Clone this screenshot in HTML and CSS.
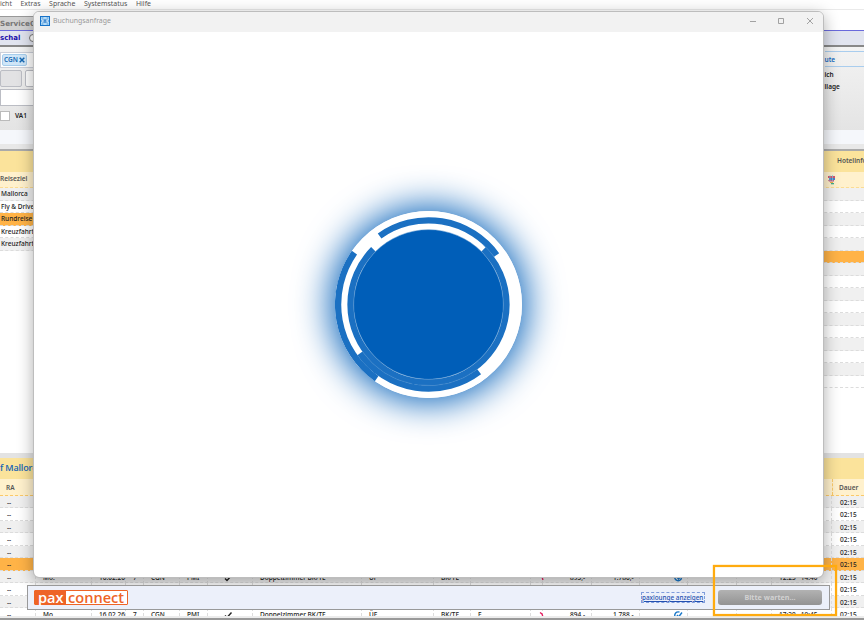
FILE: index.html
```html
<!DOCTYPE html>
<html lang="de">
<head>
    <meta charset="UTF-8">
    <meta name="viewport" content="width=device-width, initial-scale=1.0">
    <title>Buchungsanfrage</title>
    <link rel="stylesheet" href="styles.css">
</head>
<body>
    <div class="app">
        <nav class="menubar">
            <span>icht</span><span>Extras</span><span>Sprache</span><span>Systemstatus</span><span>Hilfe</span>
        </nav>
        <div class="service"><span>ServiceC</span></div>
        <div class="tabs"><b>schal</b><i class="radio"></i></div>
        <div class="filter">
            <div class="filter-left">
                <div class="tag-field"><span class="tag">CGN <svg width="6" height="6" viewBox="0 0 6 6" stroke="#1468b3" stroke-width="1.5"><path d="M.7.7l4.6 4.6M5.3.7L.7 5.3"/></svg></span></div>
                <div class="boxes"><i class="box gray"></i><i class="box"></i></div>
                <div class="field"></div>
                <div class="check"><i></i>VA1</div>
            </div>
            <div class="filter-right">
                <div class="route">ute</div>
                <p>ich</p>
                <p>llage</p>
            </div>
        </div>
        <div class="filter-end"></div>

        <div class="band first"><span class="hotel">Hotelinfo</span></div>
        <div class="heads"><span>Reiseziel</span>
            <svg class="mini" width="8" height="10" viewBox="0 0 8 10">
                <path d="M0 1h7v2H0z" fill="#d6546d"/><path d="M1 3h6v2H1z" fill="#4a7fc9"/>
                <path d="M0 5h6v1.5H1z" fill="#c35b86"/><path d="M2 7h3v1H2z" fill="#e9b04a"/>
                <path d="M3 8h3v1.3H3z" fill="#3fae8d"/><path d="M2 0v6M4.5 0v6" stroke="#7cd0e0" stroke-width=".7"/>
            </svg>
        </div>
        <div class="lists">
            <div class="list" id="regions"></div>
            <div class="list" id="hotels"></div>
        </div>

        <div class="band second">f Mallorca</div>
        <div class="offer head"><span class="c-ra">RA</span><span class="c-dur">Dauer</span></div>
        <div class="offers" id="offers"></div>
        <div class="statusbar"></div>
    </div>

    <div class="window">
        <div class="titlebar">
            <svg width="10" height="10" viewBox="0 0 10 10">
                <path d="M0 0h10v10H0z" fill="#1672c9"/>
                <path d="M1 1h8v8H1z" fill="#b9def8"/>
                <path d="M1.6 2h1.8M6.6 2h1.8M1.6 8h1.8M6.6 8h1.8" stroke="#1672c9" stroke-width=".7"/>
                <path d="M1 5Q5 1.6 9 5 5 8.4 1 5z" fill="#fff" stroke="#1672c9" stroke-width=".5"/>
                <circle cx="5" cy="5" r="1.6" fill="#1672c9"/><circle cx="5" cy="5" r=".6" fill="#fff"/>
            </svg>
            <span class="title">Buchungsanfrage</span>
            <svg class="controls" width="62" height="8" viewBox="0 0 62 8" fill="none" stroke="#999" stroke-width=".9">
                <path d="M0 4.5h6M28.5 1.5h5v5h-5zM57 1l6 6M63 1l-6 6"/>
            </svg>
        </div>
        <div class="content">
            <div class="loader">
                <svg width="187" height="187" viewBox="-93.5 -93.5 187 187" fill="none">
                    <circle r="93.4" fill="#fff"/>
                    <g id="arcs" stroke="#1b70c2" stroke-width="6.3"></g>
                    <circle r="74.8" fill="#005eb8" stroke="#5794cf" stroke-width=".5"/>
                    <path d="M-65.6 47.7A81.1 81.1 0 0 0-16 79.5M-10 80.5A81.1 81.1 0 0 0 48 65.4M54.6-59.9A81 81 0 0 1 65.5-47.6" stroke="#4a8dcc" stroke-width=".6"/>
                </svg>
            </div>
        </div>
    </div>

    <div class="footer">
        <div class="logo"><span>pax</span><b>connect</b></div>
        <a class="lounge">paxlounge anzeigen</a>
        <button class="wait">Bitte warten...</button>
    </div>
    <div class="highlight"></div>

    <script>
        const regions = ["Mallorca", "Fly & Drive", "Rundreise", "Kreuzfahrt", "Kreuzfahrt"];
        document.getElementById("regions").innerHTML = regions.map((r, i) =>
            `<div class="row ${i === 2 ? "active" : ""}">${r.replace("&", "&amp;")}</div>`).join("");
        document.getElementById("hotels").innerHTML = Array.from({ length: 16 }, (_, i) =>
            `<div class="row ${i === 5 ? "active" : ""}"></div>`).join("");

        const tick = '<svg width="9" height="8" viewBox="0 0 9 8" fill="none" stroke="#222" stroke-width="1.4"><path d="M1 4.5l2 2L7.5 1.5"/></svg>';
        const info = '<svg width="9" height="9" viewBox="0 0 9 9" fill="none" stroke="#1877c9" stroke-width="1.4"><path d="M7.5 5A3.4 3.4 0 1 1 5.5 1.2M3 4l1.5 2L8 1.5"/></svg>';
        const red = '<svg width="6" height="8" viewBox="0 0 6 8" fill="none" stroke="#e5175c" stroke-width="1.3"><path d="M1 1.5l2 1.5 1 3"/></svg>';
        const cells = (board, price, total, from, to) => ["--", "Mo.", "16.02.26", "7", "CGN", "PMI", tick,
            "Doppelzimmer BK/TE", "ÜF", "BK/TE", board, red, price, total, info, "", "", `${from} &nbsp; ${to}`, "02:15"];
        const blank = ["--", ...Array(17).fill(""), "02:15"];
        const offers = Array(10).fill(blank);
        offers[6] = cells("", "893,-", "1.786,-", "12:25", "14:40");
        offers[9] = cells("E", "894,-", "1.788,-", "17:20", "19:45");

        // the selected offer stays highlighted while the request is running
        document.getElementById("offers").innerHTML = offers.map((data, i) =>
            `<div class="offer ${i === 5 ? "active" : ""}">${data.map(c => `<span>${c}</span>`).join("")}</div>`).join("");

        const arc = (r, a, b) => {
            const p = t => [r * Math.cos(t * Math.PI / 180), r * Math.sin(t * Math.PI / 180)].map(v => v.toFixed(2)).join(" ");
            return `<path d="M${p(a)}A${r} ${r} 0 ${b - a > 180 ? 1 : 0} 1 ${p(b)}"/>`;
        };
        document.getElementById("arcs").innerHTML =
            arc(78, -45, 225) + arc(84.2, -125.5, -36) + arc(84.2, 53, 144.5) + arc(90.4, 125, 215);
    </script>
</body>
</html>
```
FILE: styles.css
```css
* {
    box-sizing: border-box;
}

body {
    margin: 0;
    width: 864px;
    height: 621px;
    overflow: hidden;
    position: relative;
    background: #fff;
    color: #222;
    font-family: "Noto Sans", "Open Sans", sans-serif;
    font-size: 6.5px;
    font-weight: 500;
    line-height: 12.5px;
}

p {
    margin: 0;
}

.app {
    display: flex;
    flex-direction: column;
    height: 621px;
}

.menubar {
    display: flex;
    gap: 8.6px;
    height: 10px;
    line-height: 8px;
    font-size: 6.95px;
    font-weight: 400;
    color: #555;
    border-bottom: 1px solid #eaeaea;
}

.service {
    height: 20px;
    padding-top: 6px;
}

.service span {
    display: block;
    width: 60px;
    height: 14px;
    border-top: 1px solid #999;
    background: #d2d2d2;
    font: bold 7.2px/13px "DejaVu Sans", sans-serif;
    color: #777;
}

.tabs {
    display: flex;
    align-items: center;
    gap: 9px;
    height: 17px;
    border-top: 1px solid #6a6adc;
    border-bottom: 2px solid #888;
    background: #e1e4ef;
    font: bold 7px/14px "DejaVu Sans", sans-serif;
    color: #1a0dab;
}

.radio {
    width: 8px;
    height: 8px;
    border: 1px solid #777;
    border-radius: 50%;
    background: #fff;
}

.filter {
    display: flex;
    justify-content: space-between;
    height: 83px;
    background: linear-gradient(#f3f3f3, #e4e4e4);
}

.filter-left {
    width: 60px;
    padding-top: 5px;
}

.tag-field {
    height: 16px;
    border: 1px solid #ccd0da;
    background: #fff;
    padding: 1px;
}

.tag {
    display: flex;
    align-items: center;
    gap: 1.5px;
    width: 25px;
    height: 12px;
    line-height: 10px;
    border: 1px solid #a6cdec;
    border-radius: 2px;
    background: #cfe6f8;
    color: #1468b3;
    padding-left: 1px;
    font-size: 6.5px;
    font-weight: 600;
    white-space: nowrap;
}

.boxes {
    display: flex;
    gap: 3px;
    margin-top: 2px;
}

.box {
    width: 22px;
    height: 17px;
    border: 1px solid #bbbdc4;
    border-radius: 2px;
    background: #fff;
}

.box.gray {
    background: #e2e2e4;
}

.field {
    height: 17px;
    margin-top: 2px;
    border: 1px solid #bbbdc4;
    background: #fff;
}

.check {
    display: flex;
    align-items: center;
    gap: 5px;
    margin-top: 4px;
    font-weight: 600;
}

.check i {
    width: 10px;
    height: 10px;
    border: 1px solid #bbb;
    background: #fff;
}

.filter-right {
    width: 39.5px;
    padding-top: 4px;
    line-height: 11.5px;
    font-weight: 600;
}

.route {
    height: 16px;
    line-height: 15px;
    margin-bottom: 2px;
    border-top: 1px solid #a9cdee;
    border-bottom: 1px solid #a9cdee;
    color: #1468c0;
}

.filter-end {
    height: 19px;
    border-bottom: 5px solid #e8e8e8;
    background: #f5f7fb;
}

.band {
    height: 23px;
    background: #fbe39b;
}

.first {
    display: flex;
    justify-content: flex-end;
    border-top: 2px solid #aaa;
    line-height: 20px;
    font-weight: 600;
    color: #555;
}

.hotel {
    width: 27px;
    white-space: nowrap;
}

.heads {
    display: flex;
    justify-content: space-between;
    align-items: center;
    height: 16px;
    background: #fff1cd;
    border-bottom: 1px dashed #fbdc94;
    font-weight: 600;
    color: #555;
}

.mini {
    margin-right: 28px;
}

.lists {
    display: flex;
    justify-content: space-between;
    height: 265px;
    background: #fff;
}

.list {
    width: 45px;
}

.row {
    height: 12.5px;
    border-bottom: 1px dashed #dcdcdc;
    padding-left: 1px;
    white-space: nowrap;
}

.row:nth-child(odd) {
    background: #f0f0f0;
}

.row.active,
.offer.active {
    background: #ffb347;
}

.second {
    height: 26px;
    border-top: 5px solid #e3e3e3;
    font: 600 9px/20px "Open Sans", sans-serif;
    letter-spacing: -0.15px;
    color: #1565b5;
}

.offers {
    height: 120px;
    overflow: hidden;
}

.offer {
    display: grid;
    grid-template-columns: 36px 56px 34px 18px 36px 28px 45px 109px 72px 37px 60px 12px 49px 48px 48px 49px 35px 60px 32px;
    height: 12.45px;
    border-bottom: 1px dashed #dcdcdc;
    background: #fff;
}

.offer:nth-child(odd) {
    background: #f0f0f0;
}

.offers .offer:last-child {
    background: #fff;
}

.offer span {
    padding-left: 7px;
    border-right: 1px dashed #ddd;
    line-height: 13px;
    white-space: nowrap;
}

.offer span:nth-child(13) {
    padding-left: 27px;
}

.offer span:nth-child(14) {
    padding-left: 21px;
}

.offer span:nth-child(15) {
    padding-left: 34px;
}

.offer span:nth-child(7) {
    padding-left: 16px;
}

.offer span:nth-child(12) {
    padding-left: 8px;
}

.offer span:nth-child(19) {
    padding-left: 8px;
    border: none;
}

.offer svg {
    vertical-align: middle;
}

.offer.head {
    display: flex;
    justify-content: space-between;
    height: 17px;
    background: #fff1cd;
    border-bottom: 1px dashed #fbc968;
    font-weight: 600;
    color: #555;
}

.offer.head span {
    border: none;
    line-height: 17px;
    padding-left: 6px;
}

.offer.head .c-dur {
    width: 32px;
    border-left: 1px dashed #fbc968;
}

.statusbar {
    flex: 1;
    border-top: 2px solid #ececec;
    background: linear-gradient(#999 2px, #fff 2px);
}

.window {
    position: absolute;
    left: 33px;
    top: 11px;
    width: 791px;
    height: 567px;
    border: 1px solid #bdbdbd;
    border-radius: 6px;
    background: #fff;
    background-clip: padding-box;
    box-shadow: 0 4px 16px rgba(0, 0, 0, 0.32);
    overflow: hidden;
}

.titlebar {
    display: flex;
    align-items: center;
    height: 20px;
    padding: 0 11px 2px 6px;
    background: #f2f2f2;
}

.title {
    margin-left: 3px;
    font-size: 6.95px;
    font-weight: 400;
    color: #999;
}

.controls {
    margin-left: auto;
    overflow: visible;
}

.content {
    display: flex;
    justify-content: center;
    padding-top: 179.2px;
}

.loader {
    width: 187px;
    height: 187px;
    border-radius: 50%;
    box-shadow: 0 0 36px 4px #005eb8;
}

.loader svg {
    display: block;
}

.footer {
    position: absolute;
    left: 27px;
    top: 585px;
    width: 803px;
    height: 25px;
    display: flex;
    align-items: center;
    padding: 0 7px 0 6px;
    border: 1px solid #999;
    background: #ecf0fa;
}

.logo {
    display: flex;
    width: 94px;
    height: 15px;
    border: 1px solid #ee6427;
    border-radius: 1px;
    background: #fff;
    color: #ee6427;
    font: 600 14.6px/12px "Open Sans", sans-serif;
}

.logo span {
    width: 31px;
    padding-left: 3px;
    background: #ee6427;
    color: #fff;
}

.logo b {
    padding-left: 2px;
    font-weight: 600;
}

.lounge {
    margin-left: auto;
    margin-right: 13px;
    width: 64px;
    height: 11px;
    line-height: 9px;
    border: 1px dashed #7f9ddb;
    color: #2450b0;
    font-size: 6.35px;
    text-decoration: underline;
    white-space: nowrap;
}

.wait {
    width: 104px;
    height: 15px;
    padding: 0;
    border: none;
    border-radius: 3px;
    background: linear-gradient(#b2b2b2, #939393);
    color: #d2d2d2;
    font: bold 7.2px/15px "Noto Sans", sans-serif;
}

.highlight {
    position: absolute;
    left: 713px;
    top: 565px;
    width: 124px;
    height: 51px;
    border: 2px solid #ffab0f;
    box-shadow: 0 0 1px #ffab0f, inset 0 0 1px #ffab0f;
}
```
